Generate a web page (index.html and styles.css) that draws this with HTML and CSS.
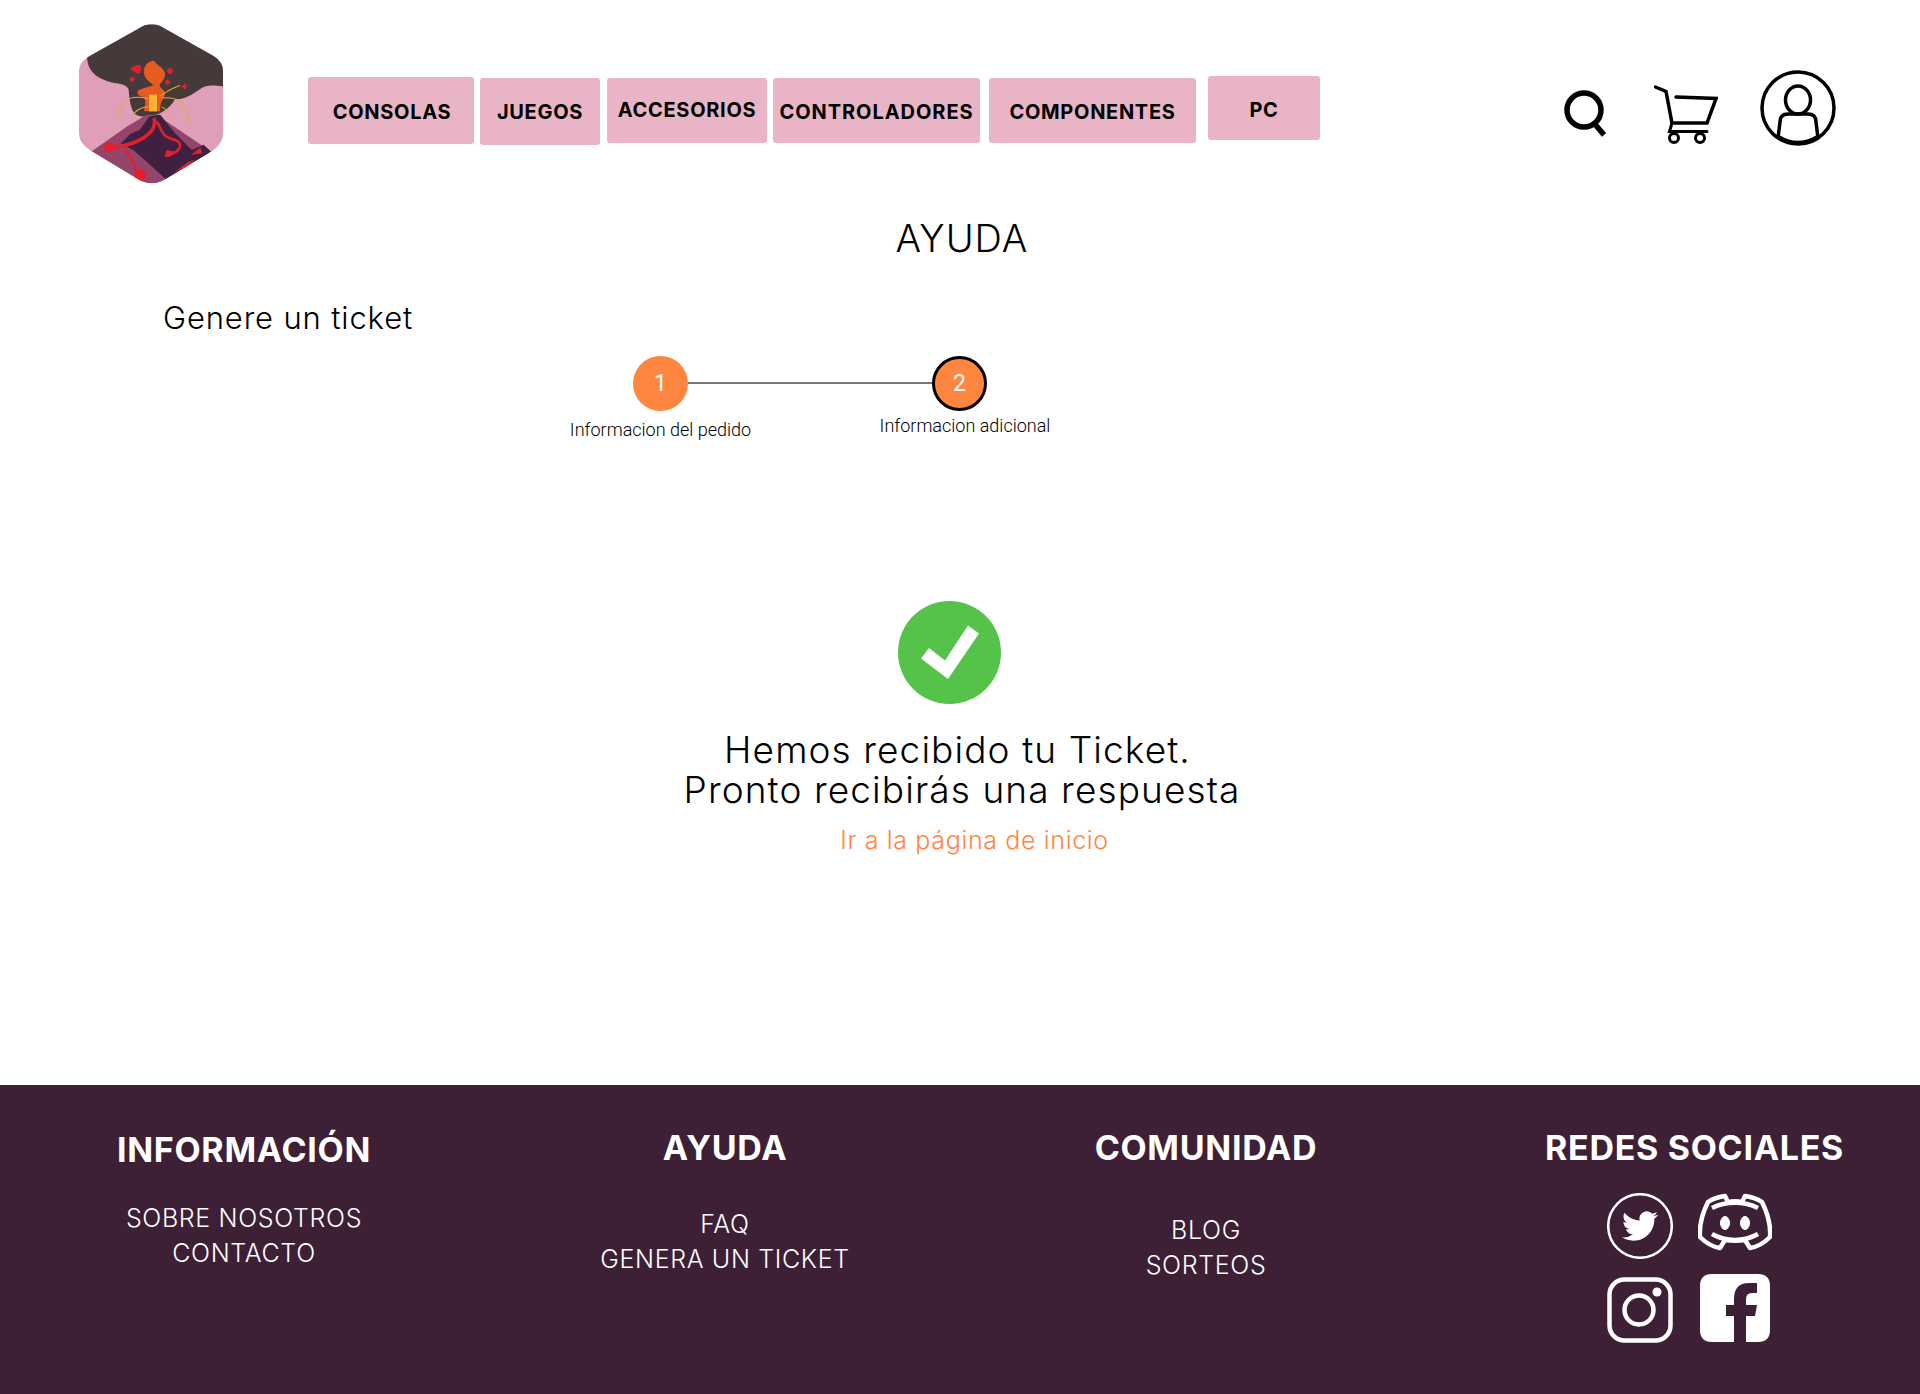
FILE: index.html
```html
<!DOCTYPE html>
<html lang="es">
<head>
<meta charset="utf-8">
<title>Ayuda</title>
<link rel="stylesheet" href="styles.css">
</head>
<body>
<header class="site-header">
  <a class="logo" href="#">
    <svg width="144" height="160" viewBox="88 75 430 476">
      <defs><clipPath id="hex"><path d="M265 88Q305 62 345 88L490 170Q518 187 518 215V400Q518 430 490 450L345 538Q305 562 265 538L120 450Q88 430 88 400V215Q88 187 120 170Z"/></clipPath></defs>
      <g clip-path="url(#hex)">
        <rect x="88" y="60" width="430" height="500" fill="#e09fb8"/>
        <path d="M80 60H530V260C500 262 475 250 450 268C425 285 405 300 375 298C350 345 290 360 258 345C240 330 238 290 236 268C225 248 190 255 160 240C125 225 112 200 112 172Z" fill="#453a39"/>
        <path d="M290 345L330 345L345 362L482 455L340 560H270L125 455L235 378Z" fill="#95456b"/>
        <path d="M298 350L330 345L375 400L425 450L460 435L490 462L350 540L295 490L250 450L212 432L240 403L270 390Z" fill="#3f2040"/>
        <path d="M312 355C320 385 300 405 260 425C235 437 205 442 165 447" fill="none" stroke="#e0202c" stroke-width="11"/>
        <path d="M320 365C340 400 335 410 375 420C400 430 395 455 350 468" fill="none" stroke="#e0202c" stroke-width="8"/>
        <path d="M225 450C255 480 250 510 280 540" fill="none" stroke="#e0202c" stroke-width="7"/>
        <path d="M375 515L415 485L435 480L405 505Z" fill="#e0202c"/>
        <circle cx="178" cy="442" r="15" fill="#e0202c"/>
        <circle cx="270" cy="525" r="18" fill="#e0202c"/>
        <path d="M422 465L450 442L456 460Z" fill="#e0202c"/>
        <path d="M360 470L343 472L350 450L375 455Z" fill="#e0202c"/>
        <path d="M282 335C285 315 290 300 280 292C268 290 258 282 265 272C280 264 300 262 310 256C300 248 285 240 282 222C278 200 296 184 312 184C320 198 345 205 345 225C345 245 325 250 330 262C340 270 350 280 342 292C332 305 330 320 330 335Z" fill="#e75a20"/>
        <rect x="297" y="285" width="24" height="50" fill="#f5b52e"/>
        <path d="M258 198C268 192 275 200 275 210C272 218 265 225 262 222L244 212C240 205 250 200 258 198ZM360 204L371 214L360 226L349 214ZM352 238L362 248L352 258L344 248ZM248 230L256 238L248 248L238 238ZM403 250L407 258L414 261L407 264L403 272L399 264L392 261L399 258Z" fill="#e0202c"/>
        <path d="M213 353C205 310 230 283 295 297M248 355C250 335 275 320 295 322M335 322C345 325 358 340 362 355M335 295C385 290 410 310 416 366M328 290C345 280 365 265 390 258" fill="none" stroke="#eda838" stroke-width="3"/>
      </g>
    </svg>
  </a>
  <nav class="main-nav">
    <a class="nav-btn nav-consolas" href="#">CONSOLAS</a>
    <a class="nav-btn nav-juegos" href="#">JUEGOS</a>
    <a class="nav-btn nav-accesorios" href="#">ACCESORIOS</a>
    <a class="nav-btn nav-controladores" href="#">CONTROLADORES</a>
    <a class="nav-btn nav-componentes" href="#">COMPONENTES</a>
    <a class="nav-btn nav-pc" href="#">PC</a>
  </nav>
  <div class="header-icons">
    <svg class="icon-search" width="42" height="48" viewBox="0 0 42 48" fill="none" stroke="#000" stroke-width="5.500"><circle cx="20" cy="20" r="17"/><path d="M30 33L40 45"/></svg>
    <svg class="icon-cart" width="64" height="60" viewBox="0 0 64 60" fill="none" stroke="#000" stroke-linecap="round"><path d="M1.500 2L12 6.500L18 38H53L62 13.500L22 12" stroke-width="3.500"/><path d="M18 38L15.500 46.500H53" stroke-width="3"/><circle cx="20" cy="53" r="4.500" stroke-width="3"/><circle cx="46" cy="53" r="4.500" stroke-width="3"/></svg>
    <svg class="icon-user" width="76" height="76" viewBox="0 0 76 76" fill="none" stroke="#000" stroke-width="3.500"><circle cx="38" cy="38" r="36"/><ellipse cx="38" cy="30" rx="12.500" ry="14"/><path d="M18 68L20 52Q20 44 28 44H48Q56 44 56 52L58 68"/><path d="M19 67Q38 78 57 67"/></svg>
  </div>
</header>

<main class="content">
  <h1 class="page-title">AYUDA</h1>
  <h2 class="section-title">Genere un ticket</h2>

  <ol class="stepper">
    <li class="step step-one"><span class="step-dot">1</span><span class="step-label">Informacion del pedido</span></li>
    <li class="step-line"></li>
    <li class="step step-two"><span class="step-dot step-dot-active">2</span><span class="step-label">Informacion adicional</span></li>
  </ol>

  <section class="confirmation">
    <svg class="check" width="103" height="103" viewBox="0 0 103 103"><circle cx="51.500" cy="51.500" r="51.500" fill="#55c24a"/><path d="M23 57.500L31 47L47 59.500L70 24.500L81 32.500L50 78Z" fill="#fff"/></svg>
    <p class="confirm-text"><span class="confirm-first">Hemos recibido tu Ticket.</span><br>Pronto recibirás una respuesta</p>
    <a class="home-link" href="#">Ir a la página de inicio</a>
  </section>
</main>

<footer class="site-footer">
  <div class="footer-col col-info">
    <h3>INFORMACIÓN</h3>
    <a href="#">SOBRE NOSOTROS</a>
    <a href="#">CONTACTO</a>
  </div>
  <div class="footer-col col-help">
    <h3>AYUDA</h3>
    <a href="#">FAQ</a>
    <a href="#">GENERA UN TICKET</a>
  </div>
  <div class="footer-col col-community">
    <h3>COMUNIDAD</h3>
    <a href="#">BLOG</a>
    <a href="#">SORTEOS</a>
  </div>
  <div class="footer-col col-social">
    <h3>REDES SOCIALES</h3>
    <div class="social-grid">
      <svg width="66" height="66" viewBox="0 0 66 66" fill="none"><circle cx="33" cy="33" r="31.800" stroke="#fff" stroke-width="2.500"/><g transform="translate(15 15) scale(1.500)"><path fill="#fff" d="M23.953 4.570a10 10 0 01-2.825.775 4.958 4.958 0 002.163-2.723c-.951.555-2.005.959-3.127 1.184a4.920 4.920 0 00-8.384 4.482C7.690 8.095 4.067 6.130 1.640 3.162a4.822 4.822 0 00-.666 2.475c0 1.710.870 3.213 2.188 4.096a4.904 4.904 0 01-2.228-.616v.060a4.923 4.923 0 003.946 4.827 4.996 4.996 0 01-2.212.085 4.936 4.936 0 004.604 3.417 9.867 9.867 0 01-6.102 2.105c-.390 0-.779-.023-1.170-.067a13.995 13.995 0 007.557 2.209c9.053 0 13.998-7.496 13.998-13.985 0-.210 0-.420-.015-.630A9.935 9.935 0 0024 4.590z"/></g></svg>
      <svg class="discord" width="74" height="58" viewBox="0 0 74 58" fill="none" stroke="#fff" stroke-width="4.500" stroke-linejoin="round"><path d="M27 3C20 4 14 6 10 9C5 19 1 31 2 44C8 50 15 54 22 55L27 47C34 48 41 48 47 47L52 55C59 54 66 50 72 44C73 31 69 19 64 9C60 6 54 4 47 3L44 9C39 8 35 8 30 9Z"/><path d="M14 15C28 8 46 8 60 15M14 41C28 49 46 49 60 41"/><ellipse cx="27" cy="30" rx="4.500" ry="6.500" fill="#fff" stroke-width="1"/><ellipse cx="47" cy="30" rx="4.500" ry="6.500" fill="#fff" stroke-width="1"/></svg>
      <svg width="66" height="66" viewBox="0 0 66 66" fill="none" stroke="#fff"><rect x="2.500" y="2.500" width="61" height="61" rx="15" stroke-width="4.500"/><circle cx="32" cy="33" r="14.500" stroke-width="4.500"/><circle cx="50" cy="15" r="4.500" fill="#fff" stroke="none"/></svg>
      <svg class="facebook" width="70" height="68" viewBox="0 0 70 68"><path fill="#fff" d="M12 0H58Q70 0 70 12V56Q70 68 58 68H46V42H55L57 31H46V25Q46 19 52 19H57V9H49Q34 9 34 25V31H26V42H34V68H12Q0 68 0 56V12Q0 0 12 0Z"/></svg>
    </div>
  </div>
</footer>
</body>
</html>
```
FILE: styles.css
```css
* { box-sizing: border-box; }
html, body { margin: 0; padding: 0; }
body {
  width: 1920px;
  height: 1394px;
  overflow: hidden;
  background: #fff;
  color: #000;
  font-family: Inter, "Liberation Sans", sans-serif;
}
a { text-decoration: none; color: inherit; }
h1, h2, h3, p, ol { margin: 0; padding: 0; }
ol { list-style: none; }

/* Header */
.site-header {
  display: flex;
  align-items: flex-start;
  height: 190px;
  padding: 24px 0 0 79px;
}
.logo { display: block; width: 144px; height: 160px; }
.main-nav {
  display: flex;
  align-items: flex-start;
  margin: 53px 0 0 85px;
}
.nav-btn {
  display: flex;
  align-items: center;
  justify-content: center;
  height: 67px;
  background: #e9b5c6;
  border-radius: 3px;
  font-size: 20px;
  font-weight: 700;
  letter-spacing: .7px;
  white-space: nowrap;
}
.nav-consolas { width: 166px; padding: 2px 0 0 2px; }
.nav-juegos { width: 120px; margin: 1px 0 0 6px; }
.nav-accesorios { width: 160px; height: 65px; margin: 1px 0 0 7px; padding-bottom: 2px; }
.nav-controladores { width: 207px; height: 65px; margin: 1px 0 0 6px; padding: 2px 0 0 0; letter-spacing: .95px; }
.nav-componentes { width: 207px; height: 65px; margin: 1px 0 0 9px; padding-top: 2px; }
.nav-pc { width: 112px; height: 64px; margin: -1px 0 0 12px; padding-top: 3px; }

.header-icons { position: relative; flex: 1; height: 130px; }
.header-icons svg { position: absolute; }
.icon-search { left: 244px; top: 66px; }
.icon-cart { left: 334px; top: 61px; }
.icon-user { left: 440px; top: 46px; }

/* Main */
.content { height: 895px; padding-top: 25px; }
.page-title {
  text-align: center;
  padding-left: 4px;
  font-size: 38px;
  line-height: 46px;
  font-weight: 300;
  letter-spacing: 1px;
}
.section-title {
  margin: 37px 0 0 163px;
  font-size: 31px;
  line-height: 40px;
  font-weight: 300;
  letter-spacing: .850px;
}

.stepper {
  display: flex;
  align-items: flex-start;
  margin: 18px 0 0 633px;
  font-family: Roboto, sans-serif;
}
.step { position: relative; width: 55px; height: 55px; }
.step-line { width: 245px; height: 2px; margin-top: 26px; background: #777; }
.step-dot {
  display: flex;
  align-items: center;
  justify-content: center;
  width: 55px;
  height: 55px;
  border-radius: 50%;
  background: #ff8640;
  color: #fff;
  font-size: 23px;
  font-weight: 400;
}
.step-dot-active { border: 3px solid #000; margin-left: -1px; }
.step-label {
  position: absolute;
  left: 50%;
  transform: translateX(-50%);
  white-space: nowrap;
  font-size: 18px;
  font-weight: 300;
  line-height: 22px;
  color: #000;
}
.step-one .step-label { top: 63px; }
.step-two .step-label { top: 59px; left: 32px; }

.confirmation {
  display: flex;
  flex-direction: column;
  align-items: center;
  margin-top: 190px;
}
.check { margin-right: 22px; }
.confirm-text {
  margin-top: 26px;
  text-align: center;
  font-size: 37px;
  line-height: 40px;
  font-weight: 300;
  letter-spacing: 1.100px;
  padding-left: 4px;
}
.confirm-first { padding-right: 9px; }
.home-link {
  margin: 14px 0 0 29px;
  font-size: 25px;
  line-height: 32px;
  font-weight: 300;
  letter-spacing: .650px;
  color: #ff8640;
}

/* Footer */
.site-footer {
  display: grid;
  grid-template-columns: 481px 481px 504px 450px;
  height: 309px;
  padding-left: 3.500px;
  background: #3e2036;
  color: #fff;
  text-align: center;
}
.footer-col { display: flex; flex-direction: column; align-items: center; }
.footer-col h3 { font-size: 34px; line-height: 44px; font-weight: 700; white-space: nowrap; letter-spacing: .7px; }
.footer-col a { font-size: 25px; line-height: 35px; font-weight: 300; letter-spacing: .65px; }
.col-info { padding-top: 43px; }
.col-info h3 { margin-bottom: 29px; }
.col-help { padding-top: 41px; }
.col-help h3 { margin-bottom: 37px; }
.col-community { padding: 41px 23px 0 0; }
.col-community h3 { margin-bottom: 43px; }
.col-social { padding-top: 41px; }
.social-grid {
  display: grid;
  grid-template-columns: 66px 74px;
  column-gap: 25px;
  row-gap: 18px;
  margin-top: 23px;
  padding-right: 10px;
}
.facebook { margin: -3px 0 0 2px; }
```
